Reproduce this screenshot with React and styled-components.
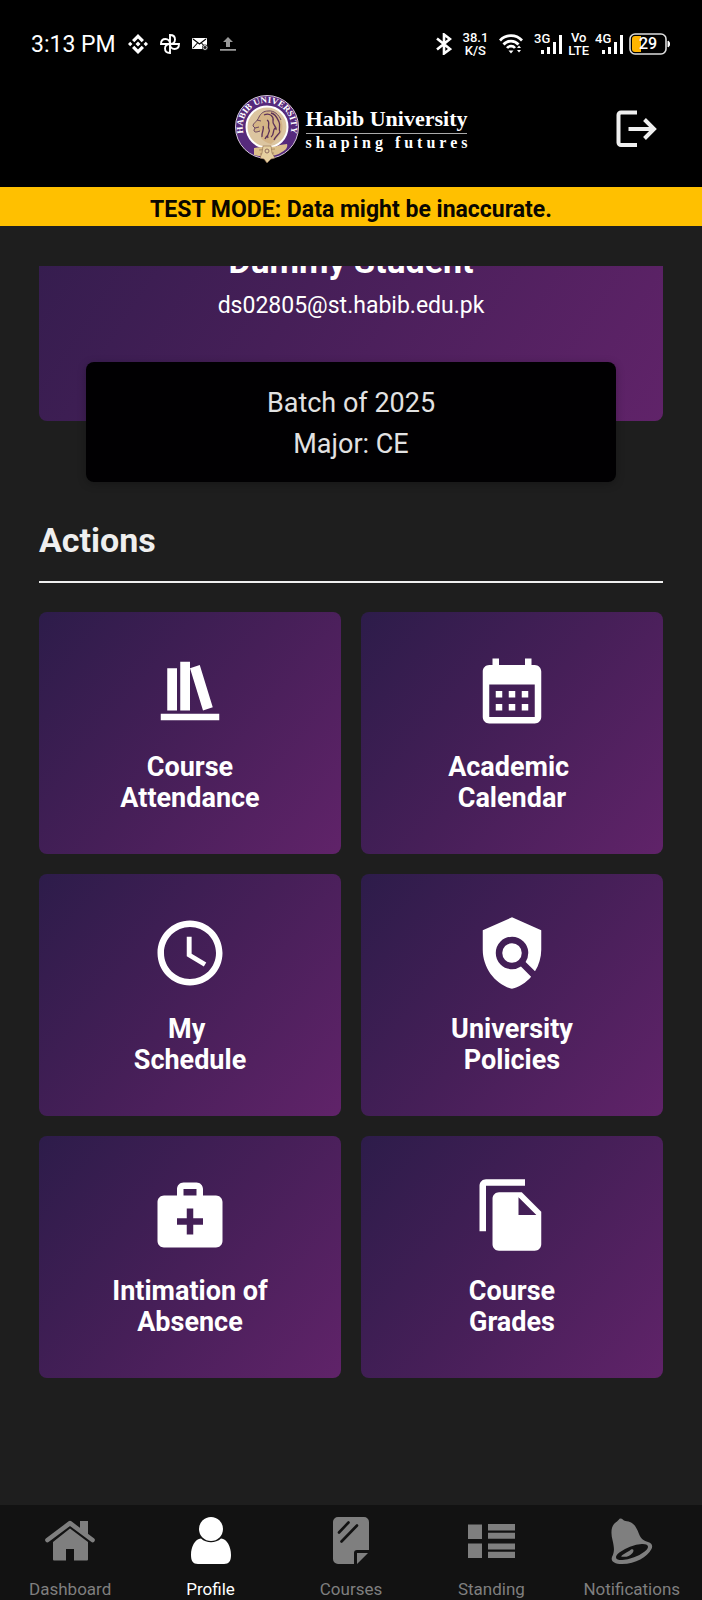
import React from "react";
import styled, { createGlobalStyle } from "styled-components";
import { MdSchedule, MdPolicy, MdMedicalServices, MdFileCopy } from "react-icons/md";

const GlobalStyle = createGlobalStyle`
  * { box-sizing: border-box; }
  body {
    margin: 0;
    background: #1e1e1e;
    color: #fff;
    font-family: Roboto, "Liberation Sans", sans-serif;
  }
  h1, h2, p { margin: 0; }
  svg { display: block; flex: none; }
`;

const purple = (angle) =>
  `linear-gradient(${angle}deg, #2d1c4a 0%, #461f58 50%, #602369 100%)`;

const Page = styled.div`
  display: flex;
  flex-direction: column;
  min-height: 100vh;
`;

const StatusBar = styled.div`
  display: flex;
  align-items: center;
  justify-content: space-between;
  height: 88px;
  padding: 0 31px;
  background: #000;
`;

const StatusGroup = styled.div`
  display: flex;
  align-items: center;
  gap: ${(p) => p.$gap}px;
`;

const Clock = styled.time`
  padding-top: 2px;
  font-size: 23px;
  line-height: 28px;
`;

const StackedLabel = styled.span`
  font-size: 13px;
  font-weight: 500;
  line-height: 13px;
  text-align: center;
`;

const Header = styled.header`
  display: grid;
  grid-template-columns: 1fr auto 1fr;
  align-items: start;
  height: 99px;
  padding: 6px 45px 0;
  background: #000;
`;

const Logo = styled.div`
  grid-column: 2;
  display: flex;
  gap: 7px;
`;

const Wordmark = styled.div`
  padding-top: 13px;
  font-family: "Liberation Serif", serif;
  font-weight: 700;
`;

const LogoName = styled.div`
  padding-bottom: 2px;
  border-bottom: 1px solid #aaa;
  font-size: 22px;
  line-height: 24px;
`;

const LogoTagline = styled.div`
  font-size: 16px;
  line-height: 18px;
  letter-spacing: 4px;
  margin-right: -4px;
`;

const LogoutButton = styled.button`
  grid-column: 3;
  justify-self: end;
  margin-top: 15px;
  padding: 0;
  border: 0;
  background: none;
  color: #f0f0f0;
`;

const Banner = styled.p`
  padding: 9px 16px 2px;
  background: #ffc000;
  color: #0a0700;
  font-size: 23px;
  font-weight: 700;
  line-height: 28px;
  text-align: center;
`;

const ScrollArea = styled.main`
  flex: 1;
  margin-top: 40px;
  padding: 0 39px 40px;
  overflow: hidden;
`;

const ProfileCard = styled.section`
  margin-top: -245px;
  padding: 220px 24px 101px;
  border-radius: 8px;
  background: ${purple(123)};
  text-align: center;
`;

const StudentName = styled.h1`
  font-size: 34px;
  line-height: 40px;
`;

const Email = styled.p`
  margin-top: 11px;
  font-size: 23px;
  line-height: 28px;
`;

const ProgramCard = styled.section`
  position: relative;
  width: 85%;
  margin: -59px auto 0;
  padding: 21px 20px 17px;
  border-radius: 8px;
  background: #010002;
  box-shadow: 0 2px 8px rgba(0, 0, 0, 0.25);
  color: #e2e2e2;
  font-size: 27px;
  line-height: 41px;
  text-align: center;
`;

const SectionTitle = styled.h2`
  margin: 38px 0 29px;
  padding-bottom: 21px;
  border-bottom: 2px solid #efefef;
  color: #efefef;
  font-size: 34px;
  line-height: 40px;
`;

const Grid = styled.div`
  display: grid;
  grid-template-columns: 1fr 1fr;
  gap: 20px;
`;

const Tile = styled.button`
  display: flex;
  flex-direction: column;
  align-items: center;
  gap: 22px;
  padding: 40px 16px;
  border: 0;
  border-radius: 8px;
  background: ${purple(129)};
  color: #fff;
  font: 700 27px/31px Roboto, "Liberation Sans", sans-serif;
  text-align: center;
  white-space: pre;
`;

const TabBar = styled.nav`
  display: grid;
  grid-template-columns: repeat(5, 1fr);
  padding: 11px 0 1px;
  background: #121212;
`;

const Tab = styled.a`
  display: flex;
  flex-direction: column;
  align-items: center;
  gap: 13px;
  color: ${(p) => (p.$active ? "#fff" : "#7f7f7f")};
  font-size: 17px;
  line-height: 20px;
  text-decoration: none;
`;

const Binance = () => (
  <svg width="20" height="20" viewBox="0 0 20 20" fill="#fff" aria-hidden="true">
    <path d="M10 0l6 6-2.3 2.3L10 4.6 6.300 8.300 4 6zM10 20l6-6-2.300-2.300L10 15.400l-3.700-3.700L4 14zM10 7.500l2.500 2.500L10 12.500 7.500 10zM2.200 7.800L4.400 10l-2.200 2.200L0 10zM17.800 7.800L20 10l-2.200 2.200L15.600 10z" />
  </svg>
);

const Pinwheel = () => (
  <svg width="20" height="20" viewBox="0 0 20 20" fill="none" stroke="#fff" strokeWidth="1.900" aria-hidden="true">
    <path d="M10 10V1c3.500 0 5 2 5 4.500S13 10 10 10zM10 10h9c0 3.500-2 5-4.500 5S10 13 10 10zM10 10v9c-3.500 0-5-2-5-4.500S7 10 10 10zM10 10H1c0-3.500 2-5 4.500-5S10 7 10 10z" />
  </svg>
);

const Mail = () => (
  <svg width="16" height="14" viewBox="0 0 16 14" aria-hidden="true">
    <rect y="1" width="15" height="11" rx="1" fill="#fff" />
    <path d="M1 2l6.500 5L14 2M1 11l4.500-5M14 11L9.500 6" fill="none" stroke="#000" strokeWidth="1.100" />
    <circle cx="13" cy="10.500" r="3" fill="#222" />
    <circle cx="13" cy="10.500" r="2" fill="none" stroke="#ccc" />
  </svg>
);

const Upload = () => (
  <svg width="16" height="14" viewBox="0 0 16 14" fill="#999" aria-hidden="true">
    <path d="M8 0l5 5h-3v5H6V5H3zM0 12h16v1.800H0z" />
  </svg>
);

const Bluetooth = () => (
  <svg width="16" height="22" viewBox="0 0 16 22" fill="none" stroke="#fff" strokeWidth="2.600" aria-hidden="true">
    <path d="M1 5.500l13 10.500-6 4.500v-19L14 6 1 16.500" />
  </svg>
);

const Wifi = () => (
  <svg width="24" height="20" viewBox="0 0 24 20" fill="none" stroke="#fff" strokeWidth="2.700" aria-hidden="true">
    <path d="M1 6.500c6-6.500 16-6.500 22 0M4.500 10.500c4-4.600 11-4.600 15 0M8 14c2-2.400 6-2.400 8 0" />
    <path d="M9.500 16.500h5L12 19.500zM18 14l2-2.500 2 2.500zM18 16l2 2.500 2-2.500z" fill="#fff" stroke="none" />
  </svg>
);

const Signal = ({ label }) => (
  <svg width="28" height="24" viewBox="0 0 28 24" fill="#fff" aria-hidden="true">
    <text x="0" y="11" fontFamily="Roboto" fontSize="13" fontWeight="500">{label}</text>
    <path d="M7 18h3v4H7zM13 15h3v7h-3zM19 10h3v12h-3zM25 3h3v19h-3z" />
  </svg>
);

const Battery = () => (
  <svg width="42" height="24" viewBox="0 0 42 24" aria-hidden="true">
    <rect x="1" y="2" width="36" height="20" rx="5" fill="none" stroke="#ddd" strokeWidth="1.600" />
    <path d="M6 4h6v16H6a3 3 0 0 1-3-3V7a3 3 0 0 1 3-3z" fill="#ffb400" />
    <path d="M39 9c2 .5 2 5.500 0 6z" fill="#fff" stroke="#fff" />
    <text x="19" y="17" textAnchor="middle" fill="#fff" fontFamily="Roboto" fontSize="16" fontWeight="500">29</text>
  </svg>
);

const Emblem = () => (
  <svg width="64" height="70" viewBox="0 0 64 70" aria-hidden="true">
    <defs>
      <path id="ring" d="M14.900 50.100A24.200 24.200 0 1 1 49.100 50.100" />
    </defs>
    <circle cx="32" cy="33" r="31.500" fill="#562a7c" stroke="#d8c9dc" strokeWidth="1" />
    <circle cx="32" cy="33" r="20.500" fill="#dcc5a0" stroke="#fff" strokeWidth="2" />
    <text fill="#fff" fontFamily="Liberation Serif" fontWeight="700" fontSize="9">
      <textPath href="#ring" startOffset="50%" textAnchor="middle">HABIB UNIVERSITY</textPath>
    </text>
    <path d="M24 23c1-3 5-6 9-6 6-1 11 4 13 9 3 7 1 13-2 16s-5 6-8 8c-4-1-8-3-10-6 1-3 1-6-1-7-3 1-6 2-6-1l1-2-2-2c0-3 4-4 6-9z" fill="#d4b486" />
    <path d="M24 23c-2 5-6 6-6 9l2 2-1 2c0 3 3 2 6 1M24 23c2-4 5-6 9-6 6-1 11 4 13 9M22 26l4 1M20 34l4-1" fill="none" stroke="#6a4660" strokeWidth="1" />
    <path d="M29 21c6-3 10 2 9 6s4 5 3 9M36 19c5 1 6 5 8 9s-1 6 1 10M32 26c4 2 0 6 2 9s-3 5-1 9M40 34c-3 3 0 6-4 9M28 32c2 4-2 6-1 11M45 38c-2 3-5 5-6 8M30 45c1-2 2-3 3-4" fill="none" stroke="#5a3058" strokeWidth="1.300" />
    <path d="M19 54c5-1 8-1 12-1s10 0 14-2l7-1c1 3-1 6-5 8-4 3-9 4-15 4s-11 0-13-1z" fill="#dcc08c" />
    <path d="M24 56l16-1M25 60l14-1" stroke="#9b7c58" strokeWidth=".8" />
    <path d="M28 52h8l1 7 3 5-4 1-4 4-3-4-4-1 2-5z" fill="#e6d0a0" stroke="#8e6c50" strokeWidth=".6" />
    <circle cx="32" cy="57" r="2" fill="none" stroke="#8e6c60" />
  </svg>
);

const Logout = () => (
  <svg width="42" height="40" viewBox="0 0 42 40" fill="none" stroke="currentColor" strokeWidth="4" aria-hidden="true">
    <path d="M22 3.500H6a2.500 2.500 0 0 0-2.500 2.500v27.500A2.500 2.500 0 0 0 6 36h16M13.500 20H39M29.500 10.500L39 20l-9.500 9.500" />
  </svg>
);

const Bookshelf = () => (
  <svg width="78" height="78" viewBox="0 0 24 24" fill="currentColor" aria-hidden="true">
    <path d="M9 3v15h3V3H9m3 2l4 13 3-1-4-13-3 1M5 5v13h3V5H5M3 19v2h18v-2H3z" />
  </svg>
);

const Calendar = () => (
  <svg width="78" height="78" viewBox="0 -1 24 24" fill="currentColor" aria-hidden="true">
    <path d="M19 3h-1V1h-2v2H8V1H6v2H5c-1.110 0-2 .9-2 2v14c0 1.100.89 2 2 2h14c1.100 0 2-.9 2-2V5c0-1.100-.9-2-2-2zm0 16H5V9h14v10zM9 13H7v-2h2v2zm4 0h-2v-2h2v2zm4 0h-2v-2h2v2zm-8 4H7v-2h2v2zm4 0h-2v-2h2v2zm4 0h-2v-2h2v2z" />
  </svg>
);

const TabIcon = ({ children }) => (
  <svg width="50" height="50" viewBox="0 0 50 50" fill="currentColor" aria-hidden="true">{children}</svg>
);

const HomeShape = () => (
  <TabIcon>
    <path d="M35 5h8v15l-8-7z" />
    <path d="M2.500 24L25 7.200 47.500 24" fill="none" stroke="currentColor" strokeWidth="4.600" strokeLinecap="round" strokeLinejoin="round" />
    <path d="M25 12.500L43 26v17.500a1 1 0 0 1-1 1H29V33h-8v11.500H9a1 1 0 0 1-1-1V26z" />
  </TabIcon>
);

const PersonShape = () => (
  <TabIcon>
    <circle cx="25" cy="13" r="12" />
    <path d="M15 22.500c5.500 5 14.500 5 20 0 6 .5 10 8 10 16.500 0 6-2 9-7 9H12c-5 0-7-3-7-9 0-8.500 4-16 10-16.500z" />
  </TabIcon>
);

const NoteShape = () => (
  <TabIcon>
    <path d="M12 1h26a5 5 0 0 1 5 5v28H31a3 3 0 0 0-3 3v11H12a5 5 0 0 1-5-5V6a5 5 0 0 1 5-5zM31 37h11L31 48z" />
    <path d="M13 16.500L22.500 6.500M15.500 25.500L31 9.500" stroke="#121212" strokeWidth="2.600" strokeLinecap="round" />
  </TabIcon>
);

const ListShape = () => (
  <TabIcon>
    <path d="M2 8.500h14V23H2zM2 27.500h14V42H2zM22 8h27v6.500H22zM22 16.700h27v6H22zM22 27.500h27v6H22zM22 35.700h27V42H22z" />
  </TabIcon>
);

const BellShape = () => (
  <TabIcon>
    <path d="M13.500 2.500C15.500 2.500 16 4.500 18.500 5 26 5.500 29 10 32 18c2 5 5 7 9 8s5 4 3.500 7C40 41 29 48 15 48 7 48 3.500 45 5 41c3-6 2-10 .5-17C3.500 16 4 9 10 5.500c1.500-1 2-3 3.500-3z" />
    <ellipse cx="25" cy="36" rx="17" ry="5.700" transform="rotate(-21 25 36)" fill="#121212" />
    <path d="M14 40.500c3-3.500 6-3.500 10-7 3-1 3 1.500 1.500 3.500-3 3.500-7 4.500-11.500 3.500z" />
  </TabIcon>
);

const actions = [
  { label: "Course\nAttendance", icon: <Bookshelf /> },
  { label: "Academic \nCalendar", icon: <Calendar /> },
  { label: "My \nSchedule", icon: <MdSchedule size={78} /> },
  { label: "University\nPolicies", icon: <MdPolicy size={78} /> },
  { label: "Intimation of\nAbsence", icon: <MdMedicalServices size={78} /> },
  { label: "Course\nGrades", icon: <MdFileCopy size={78} /> },
];

const tabs = [
  { label: "Dashboard", icon: <HomeShape /> },
  { label: "Profile", icon: <PersonShape />, active: true },
  { label: "Courses", icon: <NoteShape /> },
  { label: "Standing", icon: <ListShape /> },
  { label: "Notifications", icon: <BellShape /> },
];

export default function App() {
  return (
    <Page>
      <GlobalStyle />
      <StatusBar>
        <StatusGroup $gap={12}>
          <Clock>3:13 PM</Clock>
          <Binance />
          <Pinwheel />
          <Mail />
          <Upload />
        </StatusGroup>
        <StatusGroup $gap={11}>
          <Bluetooth />
          <StackedLabel>38.1<br />K/S</StackedLabel>
          <Wifi />
          <StatusGroup $gap={6}>
            <Signal label="3G" />
            <StackedLabel>Vo<br />LTE</StackedLabel>
            <Signal label="4G" />
            <Battery />
          </StatusGroup>
        </StatusGroup>
      </StatusBar>
      <Header>
        <Logo>
          <Emblem />
          <Wordmark>
            <LogoName>Habib University</LogoName>
            <LogoTagline>shaping futures</LogoTagline>
          </Wordmark>
        </Logo>
        <LogoutButton type="button" aria-label="Log out">
          <Logout />
        </LogoutButton>
      </Header>
      <Banner>TEST MODE: Data might be inaccurate.</Banner>
      <ScrollArea>
        <ProfileCard>
          <StudentName>Dummy Student</StudentName>
          <Email>ds02805@st.habib.edu.pk</Email>
        </ProfileCard>
        <ProgramCard>
          <p>Batch of 2025</p>
          <p>Major: CE</p>
        </ProgramCard>
        <SectionTitle>Actions</SectionTitle>
        <Grid>
          {actions.map(({ label, icon }) => (
            <Tile key={label} type="button">
              {icon}
              <span>{label}</span>
            </Tile>
          ))}
        </Grid>
      </ScrollArea>
      <TabBar>
        {tabs.map(({ label, icon, active }) => (
          <Tab key={label} href="#" $active={active} aria-current={active ? "page" : undefined}>
            {icon}
            {label}
          </Tab>
        ))}
      </TabBar>
    </Page>
  );
}
